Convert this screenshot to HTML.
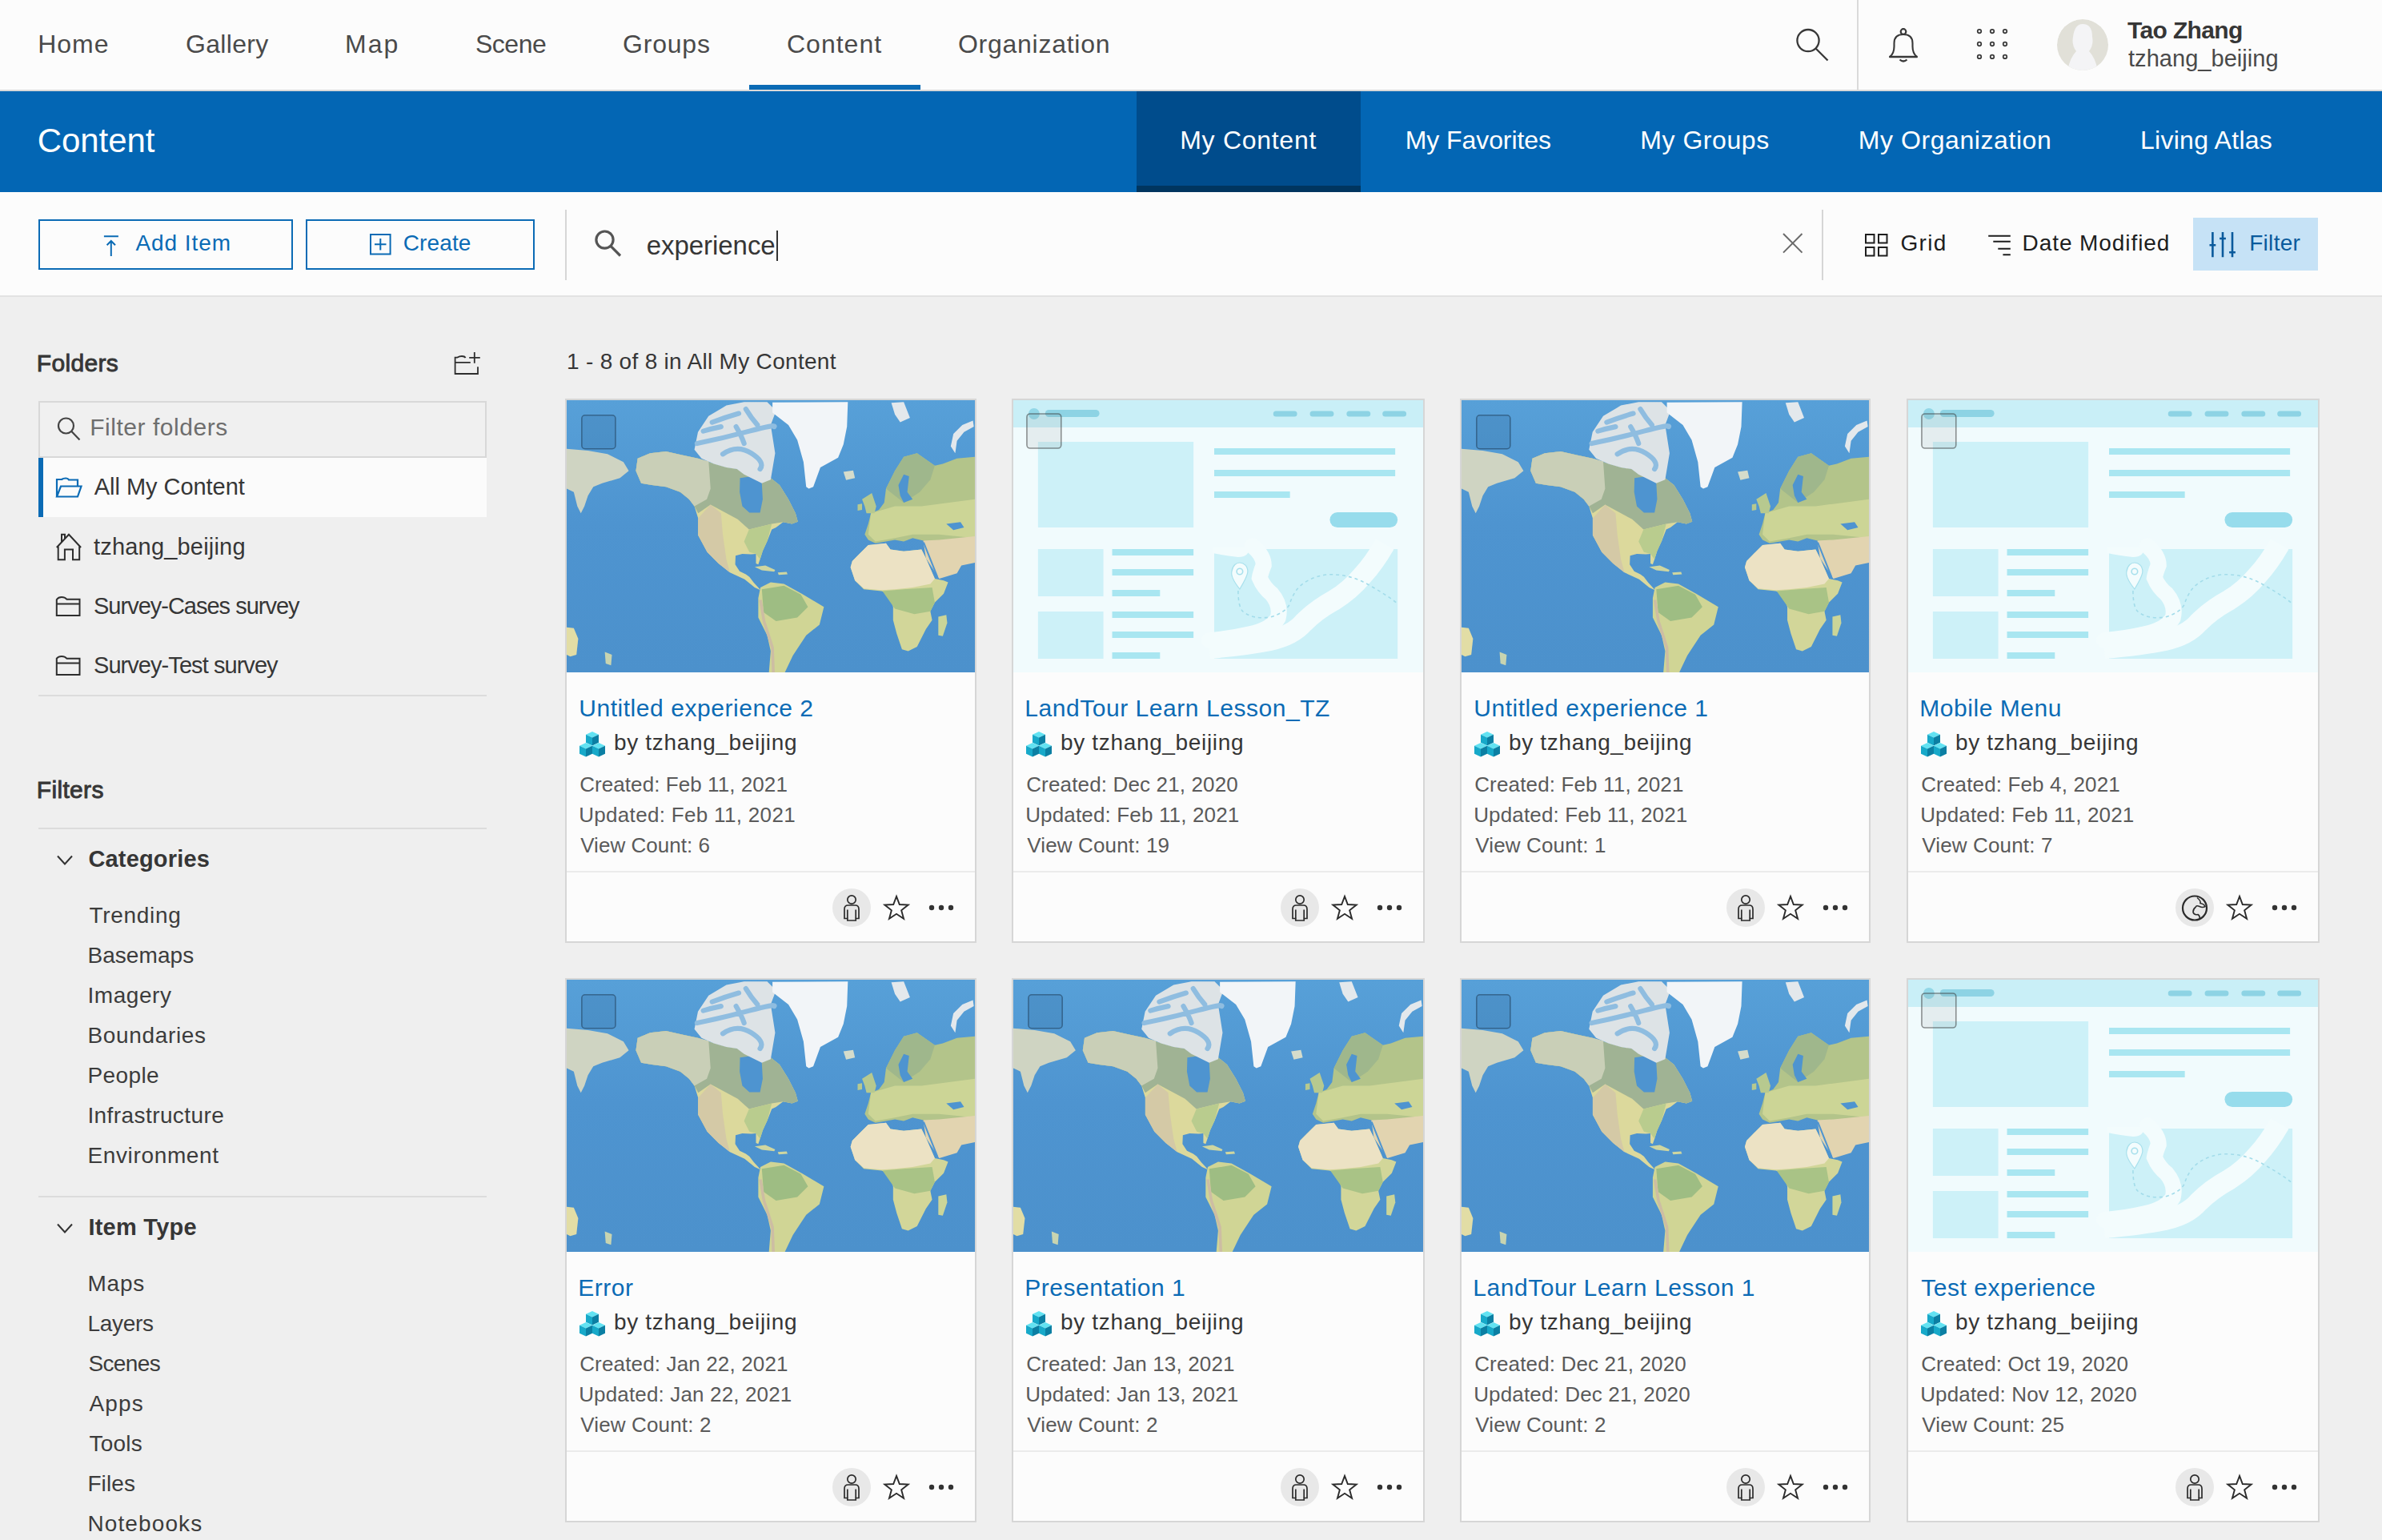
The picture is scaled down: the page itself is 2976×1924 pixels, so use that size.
<!DOCTYPE html>
<html><head><meta charset="utf-8"><title>Content</title>
<style>
html,body{margin:0;padding:0}
body{width:2976px;height:1924px;position:relative;overflow:hidden;background:#efefef;font-family:"Liberation Sans",sans-serif}
.t{position:absolute;white-space:nowrap;line-height:1}
.a{position:absolute}
svg{position:absolute;overflow:visible}
</style></head><body>
<svg width="0" height="0" style="position:absolute"><defs><symbol id="wm" viewBox="0 0 2301 1540" preserveAspectRatio="none"><linearGradient id="oc" x1="0" y1="0" x2="0" y2="1"><stop offset="0" stop-color="#57a0d8"/><stop offset="0.45" stop-color="#4e94d0"/><stop offset="1" stop-color="#4c91cc"/></linearGradient><rect width="2301" height="1540" fill="url(#oc)"/><polygon points="0,275 120,285 230,305 320,350 350,400 300,440 200,470 150,490 120,540 100,600 80,640 60,600 40,520 0,500" fill="#cfd4c2"/><polygon points="390,400 400,330 470,300 560,290 650,310 740,330 830,360 900,380 960,390 1000,420 1100,420 1150,440 1200,480 1250,560 1290,640 1303,687 1270,700 1220,690 1180,720 1156,732 1131,796 1105,853 1090,900 1080,930 1067,924 1067,870 1040,872 990,870 952,880 950,930 975,968 1010,985 1030,1000 1054,1032 1080,1060 1092,1075 1060,1060 1003,1013 920,975 856,924 792,860 741,764 741,668 720,600 690,560 640,520 560,490 480,480 420,470" fill="#dcd99c"/><polygon points="400,330 470,300 560,290 650,310 740,330 830,360 900,380 960,390 1000,420 1100,420 1150,440 1200,480 1250,560 1290,640 1303,687 1270,700 1220,690 1156,700 1028,732 964,674 811,591 741,640 720,600 690,560 640,520 560,490 480,480 420,470 390,400" fill="#a0b394"/><polygon points="400,330 470,300 560,290 650,310 740,330 800,345 811,500 790,560 720,600 690,560 640,520 560,490 480,480 420,470 390,400" fill="#c9cfb7"/><polygon points="741,668 811,591 870,640 880,760 900,900 920,975 856,924 792,860 741,764" fill="#d4c9a6"/><polygon points="1028,732 1156,700 1131,796 1105,853 1090,900 1067,870 1030,860 1000,800" fill="#b9cc8e"/><polygon points="977,440 1040,431 1060,380 1080,303 1143,310 1140,400 1100,470 1105,560 1090,636 1030,636 990,600 975,520" fill="#4e94d0"/><polygon points="1060,943 1120,935 1175,960 1170,970 1100,962" fill="#cfd6a0"/><polygon points="1190,975 1240,972 1245,985 1195,988" fill="#cfd6a0"/><polygon points="720,280 740,180 800,90 900,30 1000,10 1130,10 1180,60 1150,140 1175,300 1150,450 1100,470 1000,420 960,390 900,380 830,360 760,330" fill="#dde3e6"/><path d="M735,245 Q880,215 1030,175 T1170,150 M880,305 Q960,250 1040,300 T1090,390 M820,125 Q900,95 970,75 M1010,50 Q1040,100 1075,140 M955,150 Q985,200 1000,245 M770,175 Q820,160 870,150" stroke="#8fbde0" stroke-width="28" fill="none" stroke-linecap="round"/><polygon points="1160,12 1585,10 1580,150 1560,250 1530,325 1430,380 1390,490 1365,500 1350,490 1335,350 1300,225 1250,140 1160,70" fill="#f2f5f8"/><polygon points="1560,405 1615,398 1625,440 1575,452" fill="#d5dccb"/><polygon points="1830,15 1900,10 1935,100 1880,125 1850,80" fill="#e3e8ec"/><polygon points="2165,260 2180,190 2230,140 2290,115 2295,150 2240,180 2200,230 2190,300" fill="#e3e8ec"/><polygon points="1680,760 1700,700 1715,640 1760,620 1790,580 1800,500 1850,400 1900,320 1975,300 2075,370 2120,360 2200,330 2301,320 2301,920 2230,910 2150,895 2100,845 2010,795 1950,780 1900,800 1850,790 1800,800 1740,810 1700,790" fill="#b3c48a"/><polygon points="1715,640 1850,600 2000,600 2301,560 2301,780 2100,760 1950,760 1850,780 1740,800 1700,760" fill="#ccd596"/><polygon points="1800,500 1850,400 1900,320 1975,300 2075,370 2050,450 1990,520 1900,580" fill="#9fb78c"/><polygon points="1870,480 1900,420 1930,430 1920,520 1950,560 1900,580 1880,540" fill="#4e94d0"/><polygon points="2140,700 2220,690 2240,720 2180,735" fill="#4e94d0"/><polygon points="1665,560 1720,525 1745,600 1735,640 1690,640 1680,600" fill="#b7c98f"/><polygon points="1640,590 1665,585 1665,620 1640,625" fill="#b7c98f"/><polygon points="1610,910 1650,870 1700,820 1800,810 1825,845 1900,855 2000,845 2025,895 2075,1010 2125,1020 2150,1030 2125,1095 2075,1145 2050,1195 2060,1245 2025,1295 1975,1395 1925,1420 1890,1410 1860,1320 1840,1245 1840,1170 1815,1095 1775,1080 1675,1070 1625,1020 1600,945" fill="#d2d699"/><polygon points="1610,910 1650,870 1700,820 1800,810 1825,845 1900,855 2000,845 2025,895 2075,1010 2050,1040 1950,1060 1850,1070 1775,1075 1675,1065 1625,1020 1600,945" fill="#ece2c4"/><polygon points="1780,1080 1900,1070 2060,1060 2075,1145 2050,1195 1960,1210 1850,1180" fill="#a9c386"/><polygon points="2095,1225 2140,1215 2145,1260 2120,1335 2095,1330" fill="#cbd598"/><polygon points="2010,795 2100,790 2301,770 2301,920 2225,935 2200,980 2100,1010 2075,970 2025,895" fill="#e2d4b0"/><path d="M2012,805 L2090,1000" stroke="#4e94d0" stroke-width="9" fill="none"/><polygon points="1092,1060 1150,1030 1225,1040 1325,1095 1450,1170 1425,1270 1350,1330 1275,1445 1230,1540 1140,1540 1150,1420 1130,1330 1080,1230 1080,1120" fill="#d0d595"/><polygon points="1100,1070 1225,1050 1320,1100 1360,1170 1300,1230 1180,1250 1110,1200" fill="#9ebd83"/><path d="M1092,1130 L1112,1250 L1160,1400 L1165,1540" stroke="#cdbda3" stroke-width="16" fill="none"/><polygon points="0,1285 40,1290 65,1350 55,1440 20,1450 0,1440" fill="#e2dda5"/><polygon points="215,1425 255,1440 250,1500 220,1490" fill="#c8d4b0"/><rect x="85" y="85" width="190" height="190" rx="18" fill="rgba(0,40,80,0.10)" stroke="rgba(20,40,60,0.45)" stroke-width="7"/></symbol><symbol id="ap" viewBox="0 0 514 340" preserveAspectRatio="none"><rect width="514" height="340" fill="#f1fbfd"/><rect width="514" height="34" fill="#c9eff7"/><circle cx="26" cy="17" r="7" fill="#92d7e7"/><rect x="40" y="12" width="68" height="9" rx="4.5" fill="#8dd3e4"/><rect x="326" y="13.5" width="30" height="7" rx="3.5" fill="#8dd3e4"/><rect x="372" y="13.5" width="30" height="7" rx="3.5" fill="#8dd3e4"/><rect x="418" y="13.5" width="30" height="7" rx="3.5" fill="#8dd3e4"/><rect x="463" y="13.5" width="30" height="7" rx="3.5" fill="#8dd3e4"/><rect x="31" y="52" width="195" height="107" fill="#cdf1f8"/><rect x="252" y="60" width="227" height="8" fill="#a9e6f1"/><rect x="252" y="87" width="227" height="8" fill="#a9e6f1"/><rect x="252" y="114" width="95" height="8" fill="#a9e6f1"/><rect x="397" y="140" width="85" height="19" rx="9.5" fill="#97dcec"/><rect x="31" y="186" width="82" height="59" fill="#cdf1f8"/><rect x="31" y="264" width="82" height="59" fill="#cdf1f8"/><rect x="124" y="186" width="102" height="8" fill="#a9e6f1"/><rect x="124" y="211" width="102" height="8" fill="#a9e6f1"/><rect x="124" y="237" width="60" height="8" fill="#a9e6f1"/><rect x="124" y="264" width="102" height="8" fill="#a9e6f1"/><rect x="124" y="289" width="102" height="8" fill="#a9e6f1"/><rect x="124" y="315" width="60" height="8" fill="#a9e6f1"/><svg x="252" y="186" width="230" height="137" overflow="hidden"><rect width="230" height="137" fill="#cdf1f8"/><path d="M-2,-2 L44,-2 Q44,10 30,10 Q12,8 -2,5 Z" fill="#f3fcfd"/><path d="M48,-4 Q62,8 62,20 Q58,30 57,36 Q62,48 72,56 Q84,70 80,86 Q72,100 46,106 Q20,112 -6,114" fill="none" stroke="#f3fcfd" stroke-width="20" stroke-linecap="round"/><path d="M214,-6 Q200,18 186,33 Q170,52 150,64 Q128,76 112,92 Q98,108 70,114 Q40,120 -6,124" fill="none" stroke="#f3fcfd" stroke-width="26"/><path d="M30,52 Q30,72 36,78 Q48,88 70,85 Q88,80 94,70 Q98,58 104,50 Q116,36 140,32 Q170,30 196,46 Q214,56 230,68" fill="none" stroke="#a3dcea" stroke-width="1.6" stroke-dasharray="4 4"/><path d="M32,50 C24,40 21,32 22,28 C23,20 28,17 32,17 C37,17 42,21 42,28 C42,33 38,40 32,50 Z" fill="#f3fcfd" stroke="#a8e0ec" stroke-width="1.2"/><circle cx="32" cy="28" r="3.8" fill="none" stroke="#a8e0ec" stroke-width="1.6"/></svg><rect x="17" y="17" width="43" height="43" rx="4" fill="rgba(120,120,120,0.10)" stroke="rgba(60,60,60,0.55)" stroke-width="1.6"/></symbol></defs></svg>
<div class="a" style="left:0px;top:0px;width:2976px;height:112px;background:#fcfcfc;"></div>
<div class="a" style="left:0px;top:112px;width:2976px;height:2px;background:#d9d9d9;"></div>
<div class="a" style="left:936px;top:106px;width:214px;height:6px;background:#0b6bb5;"></div>
<div class="a" style="left:2320px;top:0px;width:2px;height:112px;background:#dadada;"></div>
<div class="a" style="left:0px;top:114px;width:2976px;height:126px;background:#0366b4;"></div>
<div class="a" style="left:1420px;top:114px;width:280px;height:126px;background:#004c8c;"></div>
<div class="a" style="left:1420px;top:232px;width:280px;height:8px;background:#00355f;"></div>
<div class="a" style="left:0px;top:240px;width:2976px;height:130px;background:#fcfcfc;"></div>
<div class="a" style="left:0px;top:369px;width:2976px;height:2px;background:#e2e2e2;"></div>
<div class="a" style="left:48px;top:274px;width:314px;height:59px;background:transparent;border:2px solid #0b6bb5"></div>
<div class="a" style="left:382px;top:274px;width:282px;height:59px;background:transparent;border:2px solid #0b6bb5"></div>
<div class="a" style="left:706px;top:262px;width:2px;height:88px;background:#d6d6d6;"></div>
<div class="a" style="left:970px;top:288px;width:2px;height:38px;background:#333333;"></div>
<div class="a" style="left:2276px;top:262px;width:2px;height:88px;background:#d6d6d6;"></div>
<div class="a" style="left:2740px;top:272px;width:156px;height:66px;background:#c6e2f6;"></div>
<svg style="left:2230px;top:20px" width="300" height="80" fill="none" stroke="#383838" stroke-width="2.3"><circle cx="29" cy="30.6" r="13.6"/><path d="M38.5,40.5 L53.5,55.5"/><circle cx="148" cy="19.5" r="3.3" stroke-width="2.2"/><path d="M131,51 Q136.5,47 136.5,38 V34 Q136.5,23 148,23 Q159.5,23 159.5,34 V38 Q159.5,47 165,51 Z" stroke-width="2.1" stroke-linejoin="round"/><path d="M130.5,51 H165.5" stroke-width="2.3"/><path d="M143.5,54.5 Q148,58.5 152.5,54.5" stroke-width="2.2"/><circle cx="243" cy="19.1" r="2.3" stroke-width="1.7"/><circle cx="243" cy="35.0" r="2.3" stroke-width="1.7"/><circle cx="243" cy="50.900000000000006" r="2.3" stroke-width="1.7"/><circle cx="259" cy="19.1" r="2.3" stroke-width="1.7"/><circle cx="259" cy="35.0" r="2.3" stroke-width="1.7"/><circle cx="259" cy="50.900000000000006" r="2.3" stroke-width="1.7"/><circle cx="275" cy="19.1" r="2.3" stroke-width="1.7"/><circle cx="275" cy="35.0" r="2.3" stroke-width="1.7"/><circle cx="275" cy="50.900000000000006" r="2.3" stroke-width="1.7"/></svg>
<svg style="left:2568px;top:22px" width="70" height="70"><defs><clipPath id="avc"><circle cx="34" cy="34" r="32"/></clipPath></defs><g clip-path="url(#avc)"><rect width="70" height="70" fill="#fcfcfc"/><path d="M2,34 A32,32 0 0 1 66,34 L66,50 Q60,62 54,66 L14,66 Q6,58 2,50 Z" fill="#e1e0d8"/><path d="M22,24 Q24,8 34,8 Q46,8 46,24 Q48,34 42,42 Q50,50 54,70 L14,70 Q18,50 26,42 Q20,34 22,24 Z" fill="#f4f4f6"/></g></svg>
<svg style="left:120px;top:280px" width="400" height="50" fill="none" stroke="#0b6bb5" stroke-width="2"><path d="M9.9,15.2 H27.9 M18.8,20.5 V40 M13.6,26.3 L18.8,21 L24,26.3"/><rect x="343" y="13" width="24.6" height="24.5"/><path d="M355.3,18 V32.5 M348,25.2 H362.5"/></svg>
<svg style="left:730px;top:280px" width="60" height="50" fill="none" stroke="#555" stroke-width="3.2"><circle cx="25.5" cy="19.6" r="10.6"/><path d="M33,27.5 L45,39.5"/></svg>
<svg style="left:2220px;top:285px" width="40" height="40" fill="none" stroke="#6a6a6a" stroke-width="2"><path d="M8,7 L31.5,30.6 M31.5,7 L8,30.6"/></svg>
<svg style="left:2320px;top:280px" width="480" height="50" fill="none" stroke="#1e1e1e" stroke-width="2"><rect x="11" y="13" width="10.5" height="10.5"/><rect x="27" y="13" width="10.5" height="10.5"/><rect x="11" y="29" width="10.5" height="10.5"/><rect x="27" y="29" width="10.5" height="10.5"/><path d="M164.2,14.7 H191.8 M170.3,21.8 H191.8 M176.3,30.8 H191.8 M182.4,38.3 H191.8"/></svg>
<svg style="left:2740px;top:272px" width="156" height="66" fill="none" stroke="#0a5a9c" stroke-width="2.6"><path d="M24.4,18 V49.3 M37,18 V49.3 M49,18 V49.3"/><path d="M20.5,34.2 H28.3 M33.1,26 H40.9 M45.1,43.3 H52.9" stroke-width="2.4"/></svg>
<svg style="left:555px;top:430px" width="60" height="50" fill="none" stroke="#2e2e2e" stroke-width="1.8"><path d="M42,28.2 V37 H13.6 V16.6 H16.5 Q19,15 22,15 Q25.5,15 26.6,17 M13.6,22.9 H32.8 M37.8,10 V23.7 M31.2,16.9 H44.8"/></svg>
<div class="a" style="left:48px;top:501px;width:556px;height:67px;background:#f0f0f0;border:2px solid #d8d8d8"></div>
<svg style="left:60px;top:510px" width="50" height="50" fill="none" stroke="#444" stroke-width="2.2"><circle cx="22.5" cy="22" r="9.5"/><path d="M29.2,28.8 L39.5,39.5"/></svg>
<div class="a" style="left:48px;top:572px;width:560px;height:74px;background:#fbfbfb;"></div>
<div class="a" style="left:48px;top:572px;width:6px;height:74px;background:#0b6bb5;"></div>
<svg style="left:60px;top:590px" width="50" height="40" fill="none" stroke="#0b6bb5" stroke-width="2.2"><path d="M11,30.5 V9 H17 Q19,7.5 22,7.5 Q25,7.5 26,9.5 H37 V16.5 M11,30.5 L16,17.5 H41.5 L37,30.5 Z" stroke-linejoin="miter"/></svg>
<svg style="left:60px;top:660px" width="50" height="200" fill="none" stroke="#2e2e2e" stroke-width="2"><path d="M12.7,22.8 V39.3 H20.9 V26.6 H31 V39.3 H39.2 V22.8 M10.8,24 L26,7.7 L41.1,24 M17,18 V7.7 H21 V13.5"/><path d="M10.8,89 V109 H39.5 V88.7 H23.4 Q21,86 17,86 Q13,86 10.8,89 Z M10.8,94.4 H39.5"/><path d="M10.8,162.7 V183 H39.5 V162.7 H23.4 Q21,160 17,160 Q13,160 10.8,162.7 Z M10.8,168.4 H39.5"/></svg>
<div class="a" style="left:48px;top:868px;width:560px;height:2px;background:#dcdcdc;"></div>
<div class="a" style="left:48px;top:1034px;width:560px;height:2px;background:#dcdcdc;"></div>
<div class="a" style="left:48px;top:1494px;width:560px;height:2px;background:#dcdcdc;"></div>
<svg style="left:60px;top:1060px" width="40" height="500" fill="none" stroke="#333" stroke-width="2"><path d="M12,9.5 L21,19.5 L30,9.5"/><path d="M12,469.5 L21,479.5 L30,469.5"/></svg>
<div class="a" style="left:706px;top:498px;width:510px;height:676px;border:2px solid #d6d6d6;background:#fcfcfc"></div>
<svg style="left:708px;top:500px" width="510" height="340"><use href="#wm" width="510" height="340"/></svg>
<div class="a" style="left:708px;top:1088px;width:510px;height:2px;background:#ebebeb"></div>
<svg style="left:723.5px;top:914px" width="33" height="33"><polygon points="16,0 24,3.75 16,7.5 8,3.75" fill="#62e2f2"/><polygon points="8,3.75 16,7.5 16,17.5 8,13.75" fill="#17a9c9"/><polygon points="16,7.5 24,3.75 24,13.75 16,17.5" fill="#0b7fa3"/><polygon points="8,14 16,17.75 8,21.5 0,17.75" fill="#62e2f2"/><polygon points="0,17.75 8,21.5 8,31.5 0,27.75" fill="#17a9c9"/><polygon points="8,21.5 16,17.75 16,27.75 8,31.5" fill="#0b7fa3"/><polygon points="24,14 32,17.75 24,21.5 16,17.75" fill="#62e2f2"/><polygon points="16,17.75 24,21.5 24,31.5 16,27.75" fill="#17a9c9"/><polygon points="24,21.5 32,17.75 32,27.75 24,31.5" fill="#0b7fa3"/></svg>
<svg style="left:1037.5px;top:1108px" width="52" height="52"><circle cx="26" cy="26" r="24" fill="#e8e8e8"/><g transform="translate(26,26.5)"><g fill="none" stroke="#2b2b2b" stroke-width="1.7"><circle cx="0" cy="-10.5" r="5.2"/><path d="M-9,13 V1.5 Q-9,-3.5 -4.5,-3.5 H4.5 Q9,-3.5 9,1.5 V13 H5.2 V15.5 H-5.2 V13 Z"/><path d="M-5.2,2 V13 M5.2,2 V13"/></g></g></svg>
<svg style="left:1099.6px;top:1114px" width="40" height="40"><polygon points="20.00,5.90 23.80,16.07 34.65,16.54 26.15,23.30 29.05,33.76 20.00,27.77 10.95,33.76 13.85,23.30 5.35,16.54 16.20,16.07" fill="none" stroke="#2b2b2b" stroke-width="1.9" stroke-linejoin="miter"/></svg>
<svg style="left:1158px;top:1128px" width="40" height="12"><circle cx="6" cy="6" r="3.2" fill="#333"/><circle cx="18" cy="6" r="3.2" fill="#333"/><circle cx="30" cy="6" r="3.2" fill="#333"/></svg>
<div class="a" style="left:1264px;top:498px;width:512px;height:676px;border:2px solid #d6d6d6;background:#fcfcfc"></div>
<svg style="left:1266px;top:500px" width="512" height="340"><use href="#ap" width="512" height="340"/></svg>
<div class="a" style="left:1266px;top:1088px;width:512px;height:2px;background:#ebebeb"></div>
<svg style="left:1281.5px;top:914px" width="33" height="33"><polygon points="16,0 24,3.75 16,7.5 8,3.75" fill="#62e2f2"/><polygon points="8,3.75 16,7.5 16,17.5 8,13.75" fill="#17a9c9"/><polygon points="16,7.5 24,3.75 24,13.75 16,17.5" fill="#0b7fa3"/><polygon points="8,14 16,17.75 8,21.5 0,17.75" fill="#62e2f2"/><polygon points="0,17.75 8,21.5 8,31.5 0,27.75" fill="#17a9c9"/><polygon points="8,21.5 16,17.75 16,27.75 8,31.5" fill="#0b7fa3"/><polygon points="24,14 32,17.75 24,21.5 16,17.75" fill="#62e2f2"/><polygon points="16,17.75 24,21.5 24,31.5 16,27.75" fill="#17a9c9"/><polygon points="24,21.5 32,17.75 32,27.75 24,31.5" fill="#0b7fa3"/></svg>
<svg style="left:1597.5px;top:1108px" width="52" height="52"><circle cx="26" cy="26" r="24" fill="#e8e8e8"/><g transform="translate(26,26.5)"><g fill="none" stroke="#2b2b2b" stroke-width="1.7"><circle cx="0" cy="-10.5" r="5.2"/><path d="M-9,13 V1.5 Q-9,-3.5 -4.5,-3.5 H4.5 Q9,-3.5 9,1.5 V13 H5.2 V15.5 H-5.2 V13 Z"/><path d="M-5.2,2 V13 M5.2,2 V13"/></g></g></svg>
<svg style="left:1659.6px;top:1114px" width="40" height="40"><polygon points="20.00,5.90 23.80,16.07 34.65,16.54 26.15,23.30 29.05,33.76 20.00,27.77 10.95,33.76 13.85,23.30 5.35,16.54 16.20,16.07" fill="none" stroke="#2b2b2b" stroke-width="1.9" stroke-linejoin="miter"/></svg>
<svg style="left:1718px;top:1128px" width="40" height="12"><circle cx="6" cy="6" r="3.2" fill="#333"/><circle cx="18" cy="6" r="3.2" fill="#333"/><circle cx="30" cy="6" r="3.2" fill="#333"/></svg>
<div class="a" style="left:1824px;top:498px;width:509px;height:676px;border:2px solid #d6d6d6;background:#fcfcfc"></div>
<svg style="left:1826px;top:500px" width="509" height="340"><use href="#wm" width="509" height="340"/></svg>
<div class="a" style="left:1826px;top:1088px;width:509px;height:2px;background:#ebebeb"></div>
<svg style="left:1841.5px;top:914px" width="33" height="33"><polygon points="16,0 24,3.75 16,7.5 8,3.75" fill="#62e2f2"/><polygon points="8,3.75 16,7.5 16,17.5 8,13.75" fill="#17a9c9"/><polygon points="16,7.5 24,3.75 24,13.75 16,17.5" fill="#0b7fa3"/><polygon points="8,14 16,17.75 8,21.5 0,17.75" fill="#62e2f2"/><polygon points="0,17.75 8,21.5 8,31.5 0,27.75" fill="#17a9c9"/><polygon points="8,21.5 16,17.75 16,27.75 8,31.5" fill="#0b7fa3"/><polygon points="24,14 32,17.75 24,21.5 16,17.75" fill="#62e2f2"/><polygon points="16,17.75 24,21.5 24,31.5 16,27.75" fill="#17a9c9"/><polygon points="24,21.5 32,17.75 32,27.75 24,31.5" fill="#0b7fa3"/></svg>
<svg style="left:2154.5px;top:1108px" width="52" height="52"><circle cx="26" cy="26" r="24" fill="#e8e8e8"/><g transform="translate(26,26.5)"><g fill="none" stroke="#2b2b2b" stroke-width="1.7"><circle cx="0" cy="-10.5" r="5.2"/><path d="M-9,13 V1.5 Q-9,-3.5 -4.5,-3.5 H4.5 Q9,-3.5 9,1.5 V13 H5.2 V15.5 H-5.2 V13 Z"/><path d="M-5.2,2 V13 M5.2,2 V13"/></g></g></svg>
<svg style="left:2216.6px;top:1114px" width="40" height="40"><polygon points="20.00,5.90 23.80,16.07 34.65,16.54 26.15,23.30 29.05,33.76 20.00,27.77 10.95,33.76 13.85,23.30 5.35,16.54 16.20,16.07" fill="none" stroke="#2b2b2b" stroke-width="1.9" stroke-linejoin="miter"/></svg>
<svg style="left:2275px;top:1128px" width="40" height="12"><circle cx="6" cy="6" r="3.2" fill="#333"/><circle cx="18" cy="6" r="3.2" fill="#333"/><circle cx="30" cy="6" r="3.2" fill="#333"/></svg>
<div class="a" style="left:2382px;top:498px;width:512px;height:676px;border:2px solid #d6d6d6;background:#fcfcfc"></div>
<svg style="left:2384px;top:500px" width="512" height="340"><use href="#ap" width="512" height="340"/></svg>
<div class="a" style="left:2384px;top:1088px;width:512px;height:2px;background:#ebebeb"></div>
<svg style="left:2399.5px;top:914px" width="33" height="33"><polygon points="16,0 24,3.75 16,7.5 8,3.75" fill="#62e2f2"/><polygon points="8,3.75 16,7.5 16,17.5 8,13.75" fill="#17a9c9"/><polygon points="16,7.5 24,3.75 24,13.75 16,17.5" fill="#0b7fa3"/><polygon points="8,14 16,17.75 8,21.5 0,17.75" fill="#62e2f2"/><polygon points="0,17.75 8,21.5 8,31.5 0,27.75" fill="#17a9c9"/><polygon points="8,21.5 16,17.75 16,27.75 8,31.5" fill="#0b7fa3"/><polygon points="24,14 32,17.75 24,21.5 16,17.75" fill="#62e2f2"/><polygon points="16,17.75 24,21.5 24,31.5 16,27.75" fill="#17a9c9"/><polygon points="24,21.5 32,17.75 32,27.75 24,31.5" fill="#0b7fa3"/></svg>
<svg style="left:2715.5px;top:1108px" width="52" height="52"><circle cx="26" cy="26" r="24" fill="#e8e8e8"/><g transform="translate(26,26.5)"><g fill="none" stroke="#2b2b2b"><circle cx="0" cy="0" r="15" stroke-width="2.2"/><path d="M3,-13 Q8,-9 7,-6 Q12,-5 13,-2 Q10,0 6,-2 Q2,-4 1,-1 Q-2,1 -2,5 Q-1,9 4,8 Q7,10 6,14" stroke-width="1.6"/></g></g></svg>
<svg style="left:2777.6px;top:1114px" width="40" height="40"><polygon points="20.00,5.90 23.80,16.07 34.65,16.54 26.15,23.30 29.05,33.76 20.00,27.77 10.95,33.76 13.85,23.30 5.35,16.54 16.20,16.07" fill="none" stroke="#2b2b2b" stroke-width="1.9" stroke-linejoin="miter"/></svg>
<svg style="left:2836px;top:1128px" width="40" height="12"><circle cx="6" cy="6" r="3.2" fill="#333"/><circle cx="18" cy="6" r="3.2" fill="#333"/><circle cx="30" cy="6" r="3.2" fill="#333"/></svg>
<div class="a" style="left:706px;top:1222px;width:510px;height:676px;border:2px solid #d6d6d6;background:#fcfcfc"></div>
<svg style="left:708px;top:1224px" width="510" height="340"><use href="#wm" width="510" height="340"/></svg>
<div class="a" style="left:708px;top:1812px;width:510px;height:2px;background:#ebebeb"></div>
<svg style="left:723.5px;top:1638px" width="33" height="33"><polygon points="16,0 24,3.75 16,7.5 8,3.75" fill="#62e2f2"/><polygon points="8,3.75 16,7.5 16,17.5 8,13.75" fill="#17a9c9"/><polygon points="16,7.5 24,3.75 24,13.75 16,17.5" fill="#0b7fa3"/><polygon points="8,14 16,17.75 8,21.5 0,17.75" fill="#62e2f2"/><polygon points="0,17.75 8,21.5 8,31.5 0,27.75" fill="#17a9c9"/><polygon points="8,21.5 16,17.75 16,27.75 8,31.5" fill="#0b7fa3"/><polygon points="24,14 32,17.75 24,21.5 16,17.75" fill="#62e2f2"/><polygon points="16,17.75 24,21.5 24,31.5 16,27.75" fill="#17a9c9"/><polygon points="24,21.5 32,17.75 32,27.75 24,31.5" fill="#0b7fa3"/></svg>
<svg style="left:1037.5px;top:1832px" width="52" height="52"><circle cx="26" cy="26" r="24" fill="#e8e8e8"/><g transform="translate(26,26.5)"><g fill="none" stroke="#2b2b2b" stroke-width="1.7"><circle cx="0" cy="-10.5" r="5.2"/><path d="M-9,13 V1.5 Q-9,-3.5 -4.5,-3.5 H4.5 Q9,-3.5 9,1.5 V13 H5.2 V15.5 H-5.2 V13 Z"/><path d="M-5.2,2 V13 M5.2,2 V13"/></g></g></svg>
<svg style="left:1099.6px;top:1838px" width="40" height="40"><polygon points="20.00,5.90 23.80,16.07 34.65,16.54 26.15,23.30 29.05,33.76 20.00,27.77 10.95,33.76 13.85,23.30 5.35,16.54 16.20,16.07" fill="none" stroke="#2b2b2b" stroke-width="1.9" stroke-linejoin="miter"/></svg>
<svg style="left:1158px;top:1852px" width="40" height="12"><circle cx="6" cy="6" r="3.2" fill="#333"/><circle cx="18" cy="6" r="3.2" fill="#333"/><circle cx="30" cy="6" r="3.2" fill="#333"/></svg>
<div class="a" style="left:1264px;top:1222px;width:512px;height:676px;border:2px solid #d6d6d6;background:#fcfcfc"></div>
<svg style="left:1266px;top:1224px" width="512" height="340"><use href="#wm" width="512" height="340"/></svg>
<div class="a" style="left:1266px;top:1812px;width:512px;height:2px;background:#ebebeb"></div>
<svg style="left:1281.5px;top:1638px" width="33" height="33"><polygon points="16,0 24,3.75 16,7.5 8,3.75" fill="#62e2f2"/><polygon points="8,3.75 16,7.5 16,17.5 8,13.75" fill="#17a9c9"/><polygon points="16,7.5 24,3.75 24,13.75 16,17.5" fill="#0b7fa3"/><polygon points="8,14 16,17.75 8,21.5 0,17.75" fill="#62e2f2"/><polygon points="0,17.75 8,21.5 8,31.5 0,27.75" fill="#17a9c9"/><polygon points="8,21.5 16,17.75 16,27.75 8,31.5" fill="#0b7fa3"/><polygon points="24,14 32,17.75 24,21.5 16,17.75" fill="#62e2f2"/><polygon points="16,17.75 24,21.5 24,31.5 16,27.75" fill="#17a9c9"/><polygon points="24,21.5 32,17.75 32,27.75 24,31.5" fill="#0b7fa3"/></svg>
<svg style="left:1597.5px;top:1832px" width="52" height="52"><circle cx="26" cy="26" r="24" fill="#e8e8e8"/><g transform="translate(26,26.5)"><g fill="none" stroke="#2b2b2b" stroke-width="1.7"><circle cx="0" cy="-10.5" r="5.2"/><path d="M-9,13 V1.5 Q-9,-3.5 -4.5,-3.5 H4.5 Q9,-3.5 9,1.5 V13 H5.2 V15.5 H-5.2 V13 Z"/><path d="M-5.2,2 V13 M5.2,2 V13"/></g></g></svg>
<svg style="left:1659.6px;top:1838px" width="40" height="40"><polygon points="20.00,5.90 23.80,16.07 34.65,16.54 26.15,23.30 29.05,33.76 20.00,27.77 10.95,33.76 13.85,23.30 5.35,16.54 16.20,16.07" fill="none" stroke="#2b2b2b" stroke-width="1.9" stroke-linejoin="miter"/></svg>
<svg style="left:1718px;top:1852px" width="40" height="12"><circle cx="6" cy="6" r="3.2" fill="#333"/><circle cx="18" cy="6" r="3.2" fill="#333"/><circle cx="30" cy="6" r="3.2" fill="#333"/></svg>
<div class="a" style="left:1824px;top:1222px;width:509px;height:676px;border:2px solid #d6d6d6;background:#fcfcfc"></div>
<svg style="left:1826px;top:1224px" width="509" height="340"><use href="#wm" width="509" height="340"/></svg>
<div class="a" style="left:1826px;top:1812px;width:509px;height:2px;background:#ebebeb"></div>
<svg style="left:1841.5px;top:1638px" width="33" height="33"><polygon points="16,0 24,3.75 16,7.5 8,3.75" fill="#62e2f2"/><polygon points="8,3.75 16,7.5 16,17.5 8,13.75" fill="#17a9c9"/><polygon points="16,7.5 24,3.75 24,13.75 16,17.5" fill="#0b7fa3"/><polygon points="8,14 16,17.75 8,21.5 0,17.75" fill="#62e2f2"/><polygon points="0,17.75 8,21.5 8,31.5 0,27.75" fill="#17a9c9"/><polygon points="8,21.5 16,17.75 16,27.75 8,31.5" fill="#0b7fa3"/><polygon points="24,14 32,17.75 24,21.5 16,17.75" fill="#62e2f2"/><polygon points="16,17.75 24,21.5 24,31.5 16,27.75" fill="#17a9c9"/><polygon points="24,21.5 32,17.75 32,27.75 24,31.5" fill="#0b7fa3"/></svg>
<svg style="left:2154.5px;top:1832px" width="52" height="52"><circle cx="26" cy="26" r="24" fill="#e8e8e8"/><g transform="translate(26,26.5)"><g fill="none" stroke="#2b2b2b" stroke-width="1.7"><circle cx="0" cy="-10.5" r="5.2"/><path d="M-9,13 V1.5 Q-9,-3.5 -4.5,-3.5 H4.5 Q9,-3.5 9,1.5 V13 H5.2 V15.5 H-5.2 V13 Z"/><path d="M-5.2,2 V13 M5.2,2 V13"/></g></g></svg>
<svg style="left:2216.6px;top:1838px" width="40" height="40"><polygon points="20.00,5.90 23.80,16.07 34.65,16.54 26.15,23.30 29.05,33.76 20.00,27.77 10.95,33.76 13.85,23.30 5.35,16.54 16.20,16.07" fill="none" stroke="#2b2b2b" stroke-width="1.9" stroke-linejoin="miter"/></svg>
<svg style="left:2275px;top:1852px" width="40" height="12"><circle cx="6" cy="6" r="3.2" fill="#333"/><circle cx="18" cy="6" r="3.2" fill="#333"/><circle cx="30" cy="6" r="3.2" fill="#333"/></svg>
<div class="a" style="left:2382px;top:1222px;width:512px;height:676px;border:2px solid #d6d6d6;background:#fcfcfc"></div>
<svg style="left:2384px;top:1224px" width="512" height="340"><use href="#ap" width="512" height="340"/></svg>
<div class="a" style="left:2384px;top:1812px;width:512px;height:2px;background:#ebebeb"></div>
<svg style="left:2399.5px;top:1638px" width="33" height="33"><polygon points="16,0 24,3.75 16,7.5 8,3.75" fill="#62e2f2"/><polygon points="8,3.75 16,7.5 16,17.5 8,13.75" fill="#17a9c9"/><polygon points="16,7.5 24,3.75 24,13.75 16,17.5" fill="#0b7fa3"/><polygon points="8,14 16,17.75 8,21.5 0,17.75" fill="#62e2f2"/><polygon points="0,17.75 8,21.5 8,31.5 0,27.75" fill="#17a9c9"/><polygon points="8,21.5 16,17.75 16,27.75 8,31.5" fill="#0b7fa3"/><polygon points="24,14 32,17.75 24,21.5 16,17.75" fill="#62e2f2"/><polygon points="16,17.75 24,21.5 24,31.5 16,27.75" fill="#17a9c9"/><polygon points="24,21.5 32,17.75 32,27.75 24,31.5" fill="#0b7fa3"/></svg>
<svg style="left:2715.5px;top:1832px" width="52" height="52"><circle cx="26" cy="26" r="24" fill="#e8e8e8"/><g transform="translate(26,26.5)"><g fill="none" stroke="#2b2b2b" stroke-width="1.7"><circle cx="0" cy="-10.5" r="5.2"/><path d="M-9,13 V1.5 Q-9,-3.5 -4.5,-3.5 H4.5 Q9,-3.5 9,1.5 V13 H5.2 V15.5 H-5.2 V13 Z"/><path d="M-5.2,2 V13 M5.2,2 V13"/></g></g></svg>
<svg style="left:2777.6px;top:1838px" width="40" height="40"><polygon points="20.00,5.90 23.80,16.07 34.65,16.54 26.15,23.30 29.05,33.76 20.00,27.77 10.95,33.76 13.85,23.30 5.35,16.54 16.20,16.07" fill="none" stroke="#2b2b2b" stroke-width="1.9" stroke-linejoin="miter"/></svg>
<svg style="left:2836px;top:1852px" width="40" height="12"><circle cx="6" cy="6" r="3.2" fill="#333"/><circle cx="18" cy="6" r="3.2" fill="#333"/><circle cx="30" cy="6" r="3.2" fill="#333"/></svg>
<div class="t" style="left:47.2px;top:38.8px;font-size:32px;font-weight:400;color:#4a4a4a;letter-spacing:1.00px;">Home</div>
<div class="t" style="left:232.0px;top:38.8px;font-size:32px;font-weight:400;color:#4a4a4a;letter-spacing:0.33px;">Gallery</div>
<div class="t" style="left:431.0px;top:38.8px;font-size:32px;font-weight:400;color:#4a4a4a;letter-spacing:2.00px;">Map</div>
<div class="t" style="left:594.0px;top:38.8px;font-size:32px;font-weight:400;color:#4a4a4a;letter-spacing:-0.50px;">Scene</div>
<div class="t" style="left:778.0px;top:38.8px;font-size:32px;font-weight:400;color:#4a4a4a;letter-spacing:0.80px;">Groups</div>
<div class="t" style="left:983.0px;top:38.8px;font-size:32px;font-weight:400;color:#4a4a4a;letter-spacing:1.00px;">Content</div>
<div class="t" style="left:1197.0px;top:38.8px;font-size:32px;font-weight:400;color:#4a4a4a;letter-spacing:0.73px;">Organization</div>
<div class="t" style="left:46.8px;top:154.7px;font-size:42px;font-weight:400;color:#ffffff;letter-spacing:-0.08px;">Content</div>
<div class="t" style="left:1474.2px;top:158.8px;font-size:32px;font-weight:400;color:#ffffff;letter-spacing:0.72px;">My Content</div>
<div class="t" style="left:1755.8px;top:158.8px;font-size:32px;font-weight:400;color:#ffffff;letter-spacing:-0.09px;">My Favorites</div>
<div class="t" style="left:2049.2px;top:158.8px;font-size:32px;font-weight:400;color:#ffffff;letter-spacing:0.56px;">My Groups</div>
<div class="t" style="left:2321.8px;top:159.3px;font-size:32px;font-weight:400;color:#ffffff;letter-spacing:0.57px;">My Organization</div>
<div class="t" style="left:2674.0px;top:159.3px;font-size:32px;font-weight:400;color:#ffffff;letter-spacing:0.27px;">Living Atlas</div>
<div class="t" style="left:2658.0px;top:23.0px;font-size:30px;font-weight:700;color:#363636;letter-spacing:-0.63px;">Tao Zhang</div>
<div class="t" style="left:2659.0px;top:59.1px;font-size:29px;font-weight:400;color:#4a4a4a;letter-spacing:0.04px;">tzhang_beijing</div>
<div class="t" style="left:169.4px;top:290.2px;font-size:28px;font-weight:400;color:#0b6bb5;letter-spacing:0.93px;">Add Item</div>
<div class="t" style="left:503.8px;top:290.2px;font-size:28px;font-weight:400;color:#0b6bb5;letter-spacing:0.10px;">Create</div>
<div class="t" style="left:807.8px;top:289.9px;font-size:33px;font-weight:400;color:#363636;letter-spacing:-0.06px;">experience</div>
<div class="t" style="left:2374.4px;top:290.2px;font-size:28px;font-weight:400;color:#1e1e1e;letter-spacing:1.33px;">Grid</div>
<div class="t" style="left:2526.6px;top:290.2px;font-size:28px;font-weight:400;color:#1e1e1e;letter-spacing:0.92px;">Date Modified</div>
<div class="t" style="left:2810.2px;top:290.2px;font-size:28px;font-weight:400;color:#0a5a9c;letter-spacing:0.30px;">Filter</div>
<div class="t" style="left:45.8px;top:438.5px;font-size:30px;font-weight:400;color:#363636;letter-spacing:0.33px;-webkit-text-stroke:0.9px #363636;">Folders</div>
<div class="t" style="left:112.2px;top:518.5px;font-size:30px;font-weight:400;color:#6e6e6e;letter-spacing:0.54px;">Filter folders</div>
<div class="t" style="left:117.8px;top:593.6px;font-size:29px;font-weight:400;color:#363636;letter-spacing:-0.04px;">All My Content</div>
<div class="t" style="left:117.0px;top:668.6px;font-size:29px;font-weight:400;color:#363636;letter-spacing:0.19px;">tzhang_beijing</div>
<div class="t" style="left:117.0px;top:742.6px;font-size:29px;font-weight:400;color:#363636;letter-spacing:-1.00px;">Survey-Cases survey</div>
<div class="t" style="left:117.0px;top:816.9px;font-size:29px;font-weight:400;color:#363636;letter-spacing:-0.94px;">Survey-Test survey</div>
<div class="t" style="left:45.8px;top:972.0px;font-size:30px;font-weight:400;color:#363636;letter-spacing:0.33px;-webkit-text-stroke:0.9px #363636;">Filters</div>
<div class="t" style="left:110.4px;top:1058.8px;font-size:29px;font-weight:700;color:#363636;letter-spacing:0.17px;">Categories</div>
<div class="t" style="left:111.4px;top:1130.2px;font-size:28px;font-weight:400;color:#3c3c3c;letter-spacing:0.71px;">Trending</div>
<div class="t" style="left:109.4px;top:1180.2px;font-size:28px;font-weight:400;color:#3c3c3c;letter-spacing:0.07px;">Basemaps</div>
<div class="t" style="left:109.4px;top:1230.2px;font-size:28px;font-weight:400;color:#3c3c3c;letter-spacing:0.58px;">Imagery</div>
<div class="t" style="left:109.4px;top:1280.2px;font-size:28px;font-weight:400;color:#3c3c3c;letter-spacing:0.67px;">Boundaries</div>
<div class="t" style="left:109.4px;top:1330.2px;font-size:28px;font-weight:400;color:#3c3c3c;letter-spacing:0.40px;">People</div>
<div class="t" style="left:109.4px;top:1380.2px;font-size:28px;font-weight:400;color:#3c3c3c;letter-spacing:0.42px;">Infrastructure</div>
<div class="t" style="left:109.4px;top:1430.2px;font-size:28px;font-weight:400;color:#3c3c3c;letter-spacing:0.65px;">Environment</div>
<div class="t" style="left:110.4px;top:1518.8px;font-size:29px;font-weight:700;color:#363636;letter-spacing:0.25px;">Item Type</div>
<div class="t" style="left:109.4px;top:1590.2px;font-size:28px;font-weight:400;color:#3c3c3c;letter-spacing:0.83px;">Maps</div>
<div class="t" style="left:109.4px;top:1640.2px;font-size:28px;font-weight:400;color:#3c3c3c;letter-spacing:-0.30px;">Layers</div>
<div class="t" style="left:110.4px;top:1690.2px;font-size:28px;font-weight:400;color:#3c3c3c;letter-spacing:-0.60px;">Scenes</div>
<div class="t" style="left:111.4px;top:1740.2px;font-size:28px;font-weight:400;color:#3c3c3c;letter-spacing:1.17px;">Apps</div>
<div class="t" style="left:111.4px;top:1790.2px;font-size:28px;font-weight:400;color:#3c3c3c;letter-spacing:0.25px;">Tools</div>
<div class="t" style="left:109.4px;top:1840.2px;font-size:28px;font-weight:400;color:#3c3c3c;letter-spacing:0.12px;">Files</div>
<div class="t" style="left:109.4px;top:1890.2px;font-size:28px;font-weight:400;color:#3c3c3c;letter-spacing:1.12px;">Notebooks</div>
<div class="t" style="left:708.0px;top:438.0px;font-size:28px;font-weight:400;color:#363636;letter-spacing:0.30px;">1 - 8 of 8 in All My Content</div>
<div class="t" style="left:723.2px;top:869.5px;font-size:30px;font-weight:400;color:#0b6bb5;letter-spacing:0.55px;">Untitled experience 2</div>
<div class="t" style="left:767.0px;top:914.4px;font-size:28px;font-weight:400;color:#363636;letter-spacing:0.66px;">by tzhang_beijing</div>
<div class="t" style="left:724.2px;top:967.3px;font-size:26px;font-weight:400;color:#5a5a5a;letter-spacing:0.07px;">Created: Feb 11, 2021</div>
<div class="t" style="left:723.2px;top:1005.4px;font-size:26px;font-weight:400;color:#5a5a5a;letter-spacing:0.32px;">Updated: Feb 11, 2021</div>
<div class="t" style="left:725.2px;top:1042.9px;font-size:26px;font-weight:400;color:#5a5a5a;letter-spacing:0.04px;">View Count: 6</div>
<div class="t" style="left:1280.2px;top:869.5px;font-size:30px;font-weight:400;color:#0b6bb5;letter-spacing:0.55px;">LandTour Learn Lesson_TZ</div>
<div class="t" style="left:1325.0px;top:914.4px;font-size:28px;font-weight:400;color:#363636;letter-spacing:0.66px;">by tzhang_beijing</div>
<div class="t" style="left:1282.2px;top:967.3px;font-size:26px;font-weight:400;color:#5a5a5a;letter-spacing:0.15px;">Created: Dec 21, 2020</div>
<div class="t" style="left:1281.2px;top:1005.4px;font-size:26px;font-weight:400;color:#5a5a5a;letter-spacing:0.15px;">Updated: Feb 11, 2021</div>
<div class="t" style="left:1283.2px;top:1042.9px;font-size:26px;font-weight:400;color:#5a5a5a;letter-spacing:0.15px;">View Count: 19</div>
<div class="t" style="left:1841.2px;top:869.5px;font-size:30px;font-weight:400;color:#0b6bb5;letter-spacing:0.55px;">Untitled experience 1</div>
<div class="t" style="left:1885.0px;top:914.4px;font-size:28px;font-weight:400;color:#363636;letter-spacing:0.66px;">by tzhang_beijing</div>
<div class="t" style="left:1842.2px;top:967.3px;font-size:26px;font-weight:400;color:#5a5a5a;letter-spacing:0.15px;">Created: Feb 11, 2021</div>
<div class="t" style="left:1841.2px;top:1005.4px;font-size:26px;font-weight:400;color:#5a5a5a;letter-spacing:0.15px;">Updated: Feb 11, 2021</div>
<div class="t" style="left:1843.2px;top:1042.9px;font-size:26px;font-weight:400;color:#5a5a5a;letter-spacing:0.15px;">View Count: 1</div>
<div class="t" style="left:2398.2px;top:869.5px;font-size:30px;font-weight:400;color:#0b6bb5;letter-spacing:0.55px;">Mobile Menu</div>
<div class="t" style="left:2443.0px;top:914.4px;font-size:28px;font-weight:400;color:#363636;letter-spacing:0.66px;">by tzhang_beijing</div>
<div class="t" style="left:2400.2px;top:967.3px;font-size:26px;font-weight:400;color:#5a5a5a;letter-spacing:0.15px;">Created: Feb 4, 2021</div>
<div class="t" style="left:2399.2px;top:1005.4px;font-size:26px;font-weight:400;color:#5a5a5a;letter-spacing:0.15px;">Updated: Feb 11, 2021</div>
<div class="t" style="left:2401.2px;top:1042.9px;font-size:26px;font-weight:400;color:#5a5a5a;letter-spacing:0.15px;">View Count: 7</div>
<div class="t" style="left:722.2px;top:1593.5px;font-size:30px;font-weight:400;color:#0b6bb5;letter-spacing:0.55px;">Error</div>
<div class="t" style="left:767.0px;top:1638.4px;font-size:28px;font-weight:400;color:#363636;letter-spacing:0.66px;">by tzhang_beijing</div>
<div class="t" style="left:724.2px;top:1691.3px;font-size:26px;font-weight:400;color:#5a5a5a;letter-spacing:0.15px;">Created: Jan 22, 2021</div>
<div class="t" style="left:723.2px;top:1729.4px;font-size:26px;font-weight:400;color:#5a5a5a;letter-spacing:0.15px;">Updated: Jan 22, 2021</div>
<div class="t" style="left:725.2px;top:1766.9px;font-size:26px;font-weight:400;color:#5a5a5a;letter-spacing:0.15px;">View Count: 2</div>
<div class="t" style="left:1280.2px;top:1593.5px;font-size:30px;font-weight:400;color:#0b6bb5;letter-spacing:0.55px;">Presentation 1</div>
<div class="t" style="left:1325.0px;top:1638.4px;font-size:28px;font-weight:400;color:#363636;letter-spacing:0.66px;">by tzhang_beijing</div>
<div class="t" style="left:1282.2px;top:1691.3px;font-size:26px;font-weight:400;color:#5a5a5a;letter-spacing:0.15px;">Created: Jan 13, 2021</div>
<div class="t" style="left:1281.2px;top:1729.4px;font-size:26px;font-weight:400;color:#5a5a5a;letter-spacing:0.15px;">Updated: Jan 13, 2021</div>
<div class="t" style="left:1283.2px;top:1766.9px;font-size:26px;font-weight:400;color:#5a5a5a;letter-spacing:0.15px;">View Count: 2</div>
<div class="t" style="left:1840.2px;top:1593.5px;font-size:30px;font-weight:400;color:#0b6bb5;letter-spacing:0.55px;">LandTour Learn Lesson 1</div>
<div class="t" style="left:1885.0px;top:1638.4px;font-size:28px;font-weight:400;color:#363636;letter-spacing:0.66px;">by tzhang_beijing</div>
<div class="t" style="left:1842.2px;top:1691.3px;font-size:26px;font-weight:400;color:#5a5a5a;letter-spacing:0.15px;">Created: Dec 21, 2020</div>
<div class="t" style="left:1841.2px;top:1729.4px;font-size:26px;font-weight:400;color:#5a5a5a;letter-spacing:0.15px;">Updated: Dec 21, 2020</div>
<div class="t" style="left:1843.2px;top:1766.9px;font-size:26px;font-weight:400;color:#5a5a5a;letter-spacing:0.15px;">View Count: 2</div>
<div class="t" style="left:2400.2px;top:1593.5px;font-size:30px;font-weight:400;color:#0b6bb5;letter-spacing:0.55px;">Test experience</div>
<div class="t" style="left:2443.0px;top:1638.4px;font-size:28px;font-weight:400;color:#363636;letter-spacing:0.66px;">by tzhang_beijing</div>
<div class="t" style="left:2400.2px;top:1691.3px;font-size:26px;font-weight:400;color:#5a5a5a;letter-spacing:0.15px;">Created: Oct 19, 2020</div>
<div class="t" style="left:2399.2px;top:1729.4px;font-size:26px;font-weight:400;color:#5a5a5a;letter-spacing:0.15px;">Updated: Nov 12, 2020</div>
<div class="t" style="left:2401.2px;top:1766.9px;font-size:26px;font-weight:400;color:#5a5a5a;letter-spacing:0.15px;">View Count: 25</div>
</body></html>
